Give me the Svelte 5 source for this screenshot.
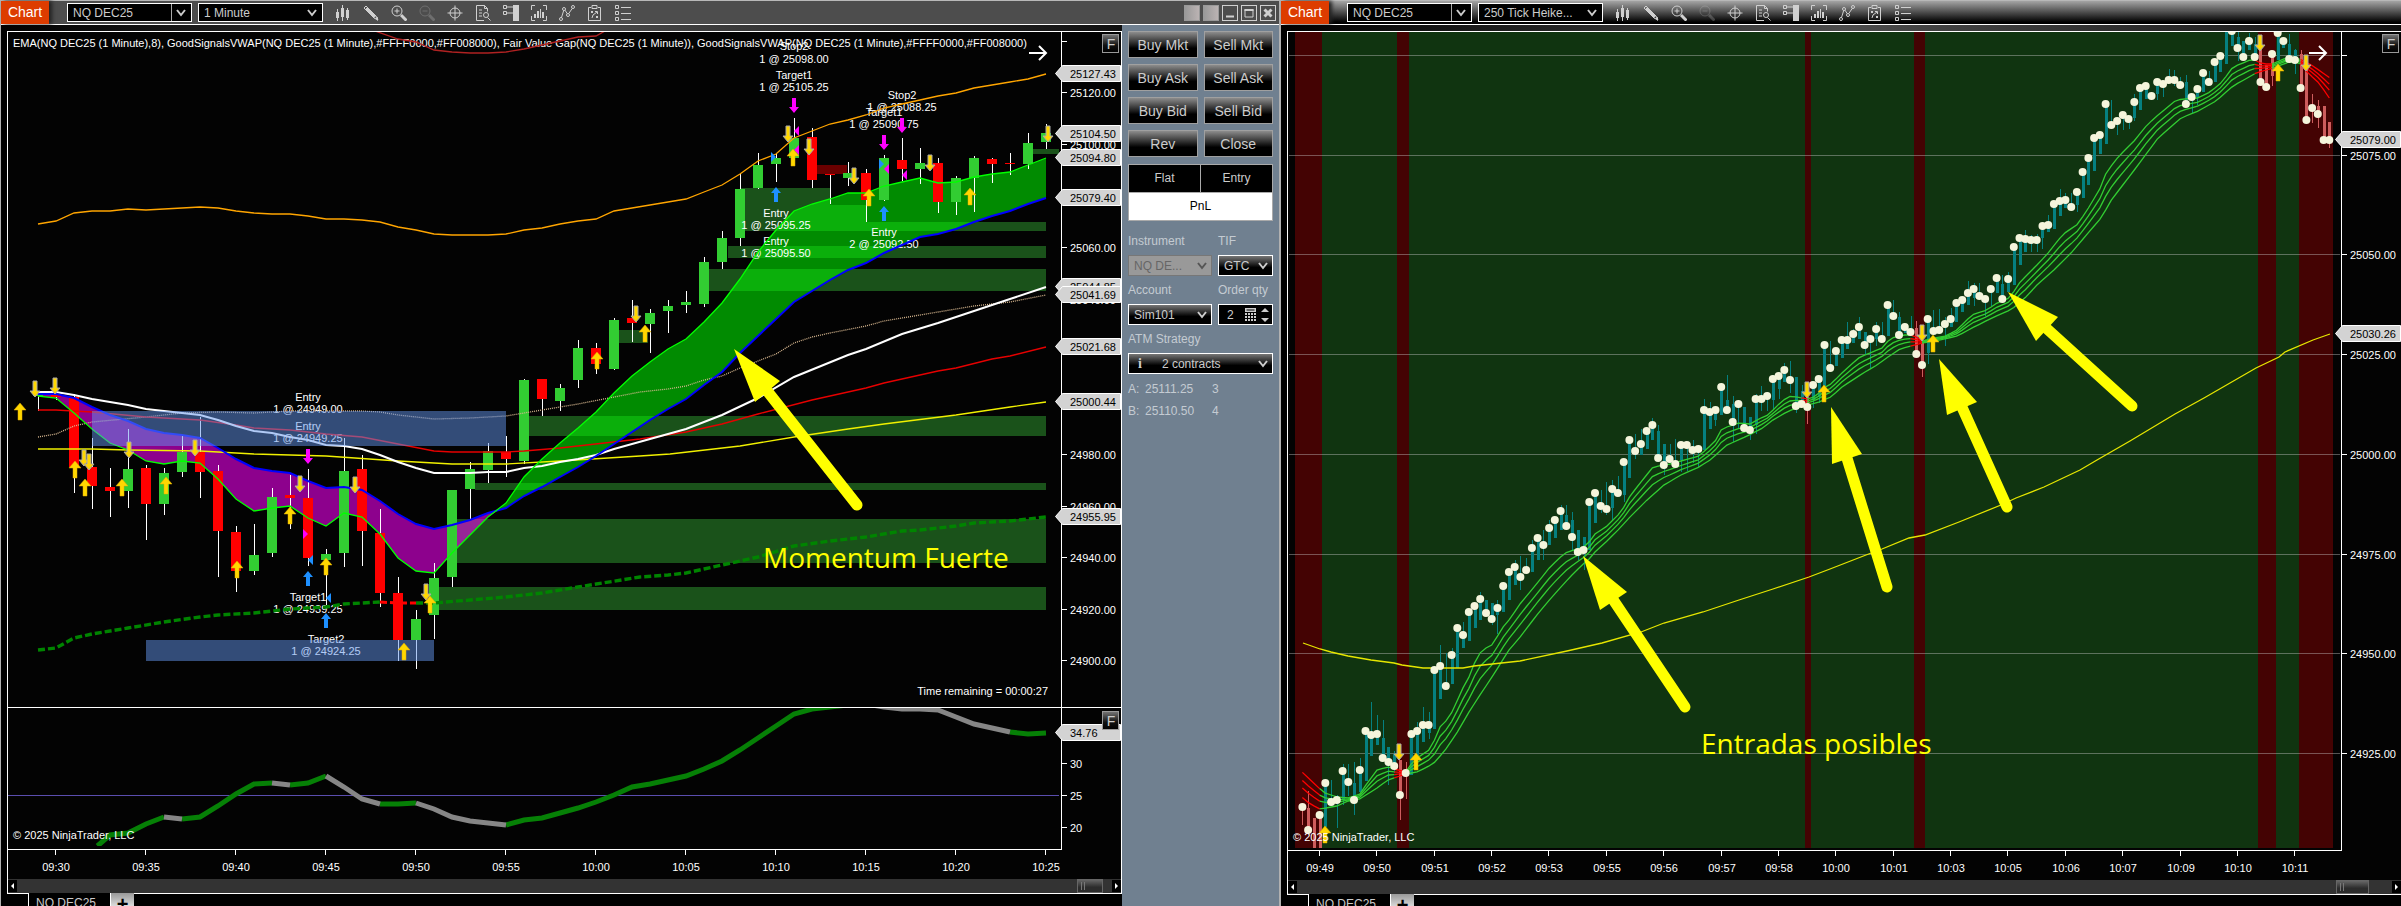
<script>
  const FONT = '"Liberation Sans", Arial, sans-serif';
  const icons = ['bars', 'pencil', 'zoomin', 'zoomout', 'cross', 'find', 'trader', 'region', 'line', 'strategy', 'list'];

  // ---------- 1 minute chart ----------
  const bx = (i) => 38 + 18 * i;
  const line = (ys, start = 0) => ys.map((y, k) => `${bx(k + start)},${y}`).join(' ');
  const join = (p) => p.map((q) => q.join(',')).join(' ');

  // colour, body top, body bottom, high, low
  const candles = [
    ['g', 394, 396, 394, 411], ['r', 394, 397, 393, 400], ['r', 397, 467, 394, 493], ['r', 467, 486, 438, 509],
    ['r', 487, 491, 468, 517], ['g', 469, 491, 429, 508], ['r', 468, 504, 465, 540], ['g', 473, 504, 468, 515],
    ['g', 452, 472, 436, 477], ['r', 452, 472, 417, 498], ['r', 471, 531, 465, 577], ['r', 532, 571, 526, 592],
    ['g', 555, 571, 524, 575], ['g', 497, 553, 488, 557], ['r', 495, 498, 475, 529], ['r', 498, 558, 469, 566],
    ['g', 554, 560, 549, 605], ['g', 471, 553, 438, 567], ['r', 469, 531, 455, 566], ['r', 533, 593, 509, 607],
    ['r', 593, 640, 577, 661], ['g', 619, 640, 610, 669], ['g', 578, 615, 563, 639], ['g', 490, 577, 490, 587],
    ['g', 469, 489, 462, 519], ['g', 451, 470, 443, 483], ['r', 452, 459, 436, 477], ['g', 380, 461, 379, 464],
    ['r', 379, 399, 379, 416], ['g', 388, 401, 384, 411], ['g', 348, 380, 340, 388], ['r', 348, 364, 343, 374],
    ['g', 320, 369, 318, 370], ['r', 318, 323, 300, 342], ['g', 313, 324, 309, 353], ['g', 306, 311, 300, 333],
    ['g', 302, 305, 291, 313], ['g', 262, 304, 257, 307], ['g', 238, 262, 231, 269], ['g', 189, 238, 174, 246],
    ['g', 165, 188, 153, 189], ['g', 158, 164, 153, 182], ['g', 138, 158, 118, 160], ['r', 137, 180, 128, 188],
    ['r', 174, 175, 174, 204], ['g', 173, 178, 162, 186], ['r', 173, 200, 169, 222], ['g', 158, 200, 155, 201],
    ['r', 160, 169, 138, 181], ['g', 163, 169, 148, 184], ['r', 163, 202, 158, 213], ['g', 178, 202, 176, 215],
    ['g', 158, 178, 156, 212], ['r', 159, 164, 158, 183], ['r', 163, 164, 153, 175], ['g', 143, 164, 133, 169],
    ['g', 133, 142, 124, 149]
  ];
  const ema = [396, 398, 413, 429, 443, 450, 461, 464, 461, 463, 479, 499, 511, 508, 506, 518, 526, 513, 517, 534, 558, 571, 573, 553, 535, 517, 503, 477, 459, 443, 428, 412, 393, 376, 362, 349, 339, 322, 303, 279, 252, 230, 211, 204, 199, 193, 193, 186, 182, 178, 183, 182, 177, 174, 172, 165, 158];
  const slow = [394, 394, 398, 407, 415, 421, 429, 433, 435, 438, 448, 459, 468, 471, 473, 481, 488, 487, 490, 501, 514, 524, 529, 525, 520, 513, 508, 496, 487, 477, 467, 456, 444, 432, 420, 409, 399, 385, 372, 353, 336, 319, 302, 291, 280, 270, 263, 253, 245, 237, 234, 229, 222, 216, 211, 204, 198];
  const upper = [224, 221, 213, 211, 211, 209, 210, 209, 208, 207, 208, 211, 213, 214, 214, 216, 219, 219, 220, 222, 227, 230, 234, 235, 235, 235, 234, 230, 228, 224, 221, 219, 211, 208, 205, 202, 199, 192, 185, 174, 161, 154, 138, 131, 124, 120, 115, 108, 104, 100, 96, 93, 88, 85, 82, 79, 74];
  const white = [...[392, 392, 395, 399, 402, 405, 409, 411, 413, 415, 420, 426, 431, 433, 437, 440, 445, 446, 449, 455, 462, 468, 473, 473, 473, 472, 472, 468, 466, 462, 459, 455, 449, 444, 439].map((y, i) => [bx(i), y]), [686, 429], [722, 415], [758, 398], [794, 377], [848, 355], [866, 349], [902, 334], [938, 323], [974, 311], [1010, 299], [1046, 287]];
  const red = [[38, 410], [56, 410], [92, 412], [146, 417], [200, 420], [236, 425], [254, 428], [290, 430], [326, 434], [362, 437], [398, 444], [434, 451], [452, 452], [506, 452], [524, 451], [560, 448], [640, 439], [686, 432], [722, 424], [758, 414], [812, 400], [866, 388], [884, 383], [938, 371], [956, 368], [992, 359], [1010, 356], [1046, 347]];
  const yellow = [[38, 449], [92, 449], [128, 450], [200, 451], [254, 454], [326, 456], [398, 461], [452, 464], [506, 464], [560, 461], [640, 456], [670, 454], [740, 446], [794, 437], [848, 429], [884, 424], [956, 415], [1010, 407], [1046, 402]];
  const tan = [[38, 437], [56, 434], [74, 426], [92, 422], [146, 417], [182, 413], [218, 412], [254, 413], [290, 411], [362, 411], [380, 412], [398, 415], [434, 419], [470, 418], [506, 416], [542, 410], [578, 404], [640, 392], [668, 389], [686, 386], [704, 380], [722, 376], [740, 368], [758, 361], [776, 354], [794, 343], [812, 337], [830, 333], [866, 326], [884, 321], [938, 312], [974, 306], [1010, 302], [1046, 295]];
  const vwapA = [[38, 650], [56, 648], [74, 638], [92, 634], [128, 628], [164, 622], [200, 617], [218, 615], [254, 613], [290, 609], [326, 607], [344, 604], [380, 602]];
  const vwapB = [[416, 603], [434, 603], [470, 600], [506, 597], [542, 593], [578, 587], [640, 577], [668, 575], [686, 573], [704, 569], [722, 565], [758, 557], [794, 546], [830, 541], [866, 537], [902, 531], [920, 530], [956, 526], [974, 523], [1010, 521], [1046, 517]];
  const topBand = [[375, 31], [398, 39], [416, 42], [434, 50], [452, 52], [470, 53], [488, 53], [506, 52], [524, 49], [560, 41], [578, 37], [596, 36], [605, 31]];
  const gaps = [[740, 188, 90, 17], [740, 205, 127, 17], [740, 222, 306, 9], [728, 246, 318, 12], [709, 269, 337, 22], [619, 330, 29, 13], [529, 416, 517, 20], [475, 483, 571, 7], [457, 519, 589, 44], [438, 587, 608, 23], [1032, 149, 27, 5]];
  const cross = 25.6;
  const cloud = (a, b) => {
    const up = [], dn = [];
    for (let i = a; i <= b; i++) { up.push([bx(i), ema[i]]); dn.unshift([bx(i), slow[i]]); }
    return [up, dn];
  };
  const [pu, pd] = cloud(0, 25);
  const purple = join([...pu, [bx(cross), 510], ...pd]);
  const [gu, gd] = cloud(26, 56);
  const green = join([[bx(cross), 510], ...gu, ...gd]);

  const ups = [[20, 403], [75, 461], [85, 479], [122, 479], [166, 477], [290, 507], [237, 561], [326, 558], [430, 596], [404, 643], [597, 352], [645, 325], [793, 149], [869, 189], [970, 188]];
  const downs = [[35, 380], [55, 377], [84, 449], [89, 453], [129, 441], [195, 439], [300, 475], [355, 476], [426, 583], [636, 305], [788, 125], [809, 138], [854, 167], [930, 154], [1048, 125]];
  const magentas = [[794, 98], [884, 135], [902, 118], [308, 449]];
  const blues = [[776, 187], [884, 206], [308, 571], [326, 613]];
  const fills = [['m', 794, 131, -1], ['m', 794, 150, -1], ['m', 884, 169, -1], ['m', 902, 175, -1], ['b', 776, 157, 1], ['b', 884, 164, 1], ['m', 308, 534, 1], ['b', 308, 560, -1], ['b', 326, 598, -1]];
  const notes = [
    [794, 46, 'Stop2'], [794, 59, '1 @ 25098.00'], [794, 75, 'Target1'], [794, 87, '1 @ 25105.25'],
    [902, 95, 'Stop2'], [902, 107, '1 @ 25088.25'], [884, 112, 'Target1'], [884, 124, '1 @ 25090.75'],
    [776, 213, 'Entry'], [776, 225, '1 @ 25095.25'], [776, 241, 'Entry'], [776, 253, '1 @ 25095.50'],
    [884, 232, 'Entry'], [884, 244, '2 @ 25092.50'],
    [308, 397, 'Entry'], [308, 409, '1 @ 24949.00'], [308, 426, 'Entry'], [308, 438, '1 @ 24949.25'],
    [308, 597, 'Target1'], [308, 609, '1 @ 24939.25'], [326, 639, 'Target2'], [326, 651, '1 @ 24924.25']
  ];
  const scaleL = [[41, ''], [92, '25120.00'], [144, '25100.00'], [247, '25060.00'], [299, '25040.00'], [454, '24980.00'], [506, '24960.00'], [557, '24940.00'], [609, '24920.00'], [660, '24900.00'], [763, '30'], [795, '25'], [827, '20']];
  const tagsL = [[73, '25127.43'], [133, '25104.50'], [157, '25094.80'], [197, '25079.40'], [286, '25044.85'], [294, '25041.69'], [346, '25021.68'], [401, '25000.44'], [516, '24955.95'], [732, '34.76']];
  const timesL = ['09:30', '09:35', '09:40', '09:45', '09:50', '09:55', '10:00', '10:05', '10:10', '10:15', '10:20', '10:25'];

  const osc = { 3.3: 846, 4: 835, 5: 833, 6: 824, 7: 817, 8: 819, 9: 817, 10: 806, 11: 794, 12: 784, 13: 783, 14: 785, 15: 783, 16: 776, 17: 787, 18: 799, 19: 804, 20: 804, 21: 803, 22: 809, 23: 817, 24: 821, 25: 823, 26: 825, 27: 820, 28: 818, 29: 813, 30: 808, 31: 802, 32: 795, 33: 787, 34: 784, 35: 780, 36: 776, 37: 769, 38: 761, 39: 750, 40: 738, 41: 726, 42: 714, 43: 709, 44: 707, 45: 705, 46: 704, 47: 707, 48: 709, 49: 709, 50: 710, 51: 717, 52: 724, 53: 728, 54: 732, 55: 734, 56: 733 };
  const oscPart = (a, b) => Object.entries(osc).map(([k, y]) => [+k, y]).filter(([k]) => k >= a && k <= b).sort((p, q) => p[0] - q[0]).map(([k, y]) => `${bx(k)},${y}`).join(' ');
  const oscGreen = [[3, 7], [8, 13], [14, 16], [19, 21], [26, 45], [54, 56]];
  const oscGray = [[7, 8], [13, 14], [16, 19], [21, 26], [45, 54]];

  // ---------- 250 tick chart ----------
  // close, body end, high, low (0 = none)
  const ticks = [
    [807, 807, 0, 825], [830, 808, 791, 0], [860, 818, 0, 0], [815, 848, 0, 0], [783, 827, 0, 0], [802, 802, 780, 0], [800, 800, 795, 828], [771, 800, 764, 805], [782, 782, 764, 796], [800, 783, 762, 815],
    [770, 792, 758, 0], [731, 781, 0, 0], [735, 756, 702, 0], [734, 745, 715, 0], [758, 738, 720, 0], [762, 747, 0, 785], [766, 754, 751, 773], [795, 760, 0, 820], [773, 773, 762, 799], [734, 775, 0, 0],
    [731, 760, 722, 0], [725, 742, 707, 0], [725, 733, 712, 739], [670, 729, 0, 0], [666, 699, 645, 0], [686, 686, 653, 0], [655, 684, 648, 0], [628, 668, 0, 0], [635, 648, 622, 0], [612, 641, 0, 0],
    [606, 628, 0, 0], [599, 620, 592, 0], [613, 600, 0, 0], [619, 603, 0, 625], [608, 615, 600, 634], [586, 612, 0, 0], [572, 600, 0, 0], [567, 585, 560, 0], [577, 577, 556, 590], [570, 570, 558, 0],
    [548, 572, 540, 0], [538, 560, 0, 0], [545, 545, 530, 560], [528, 545, 520, 0], [520, 538, 0, 0], [511, 530, 505, 0], [526, 515, 505, 0], [537, 520, 512, 550], [552, 530, 0, 560], [550, 537, 0, 570],
    [502, 550, 0, 0], [493, 523, 0, 0], [506, 506, 490, 513], [509, 509, 482, 515], [489, 508, 480, 521], [493, 493, 476, 0], [462, 495, 0, 502], [440, 478, 0, 0], [451, 451, 434, 459], [444, 455, 429, 0],
    [431, 449, 0, 0], [425, 440, 418, 0], [458, 431, 425, 0], [465, 444, 0, 475], [459, 459, 444, 463], [464, 464, 439, 0], [445, 460, 0, 472], [445, 445, 0, 471], [450, 450, 440, 463], [449, 449, 0, 467],
    [410, 450, 399, 0], [412, 429, 402, 0], [410, 420, 407, 426], [387, 415, 383, 0], [410, 400, 375, 0], [422, 404, 396, 442], [404, 404, 400, 429], [428, 407, 0, 0], [430, 417, 0, 440], [399, 425, 394, 434],
    [399, 399, 386, 411], [396, 396, 392, 411], [379, 400, 375, 409], [376, 389, 372, 399], [370, 382, 363, 0], [380, 380, 361, 393], [406, 377, 0, 413], [404, 391, 385, 0], [407, 397, 0, 424], [385, 400, 0, 408],
    [379, 397, 0, 403], [345, 386, 0, 0], [368, 368, 341, 0], [351, 366, 0, 0], [340, 358, 336, 0], [340, 349, 322, 0], [334, 343, 329, 0], [327, 339, 317, 0], [345, 332, 0, 355], [339, 339, 335, 368],
    [329, 339, 322, 346], [339, 339, 322, 0], [305, 336, 0, 0], [316, 316, 300, 0], [335, 317, 312, 0], [327, 333, 0, 0], [332, 332, 316, 0], [354, 328, 321, 0], [365, 342, 0, 377], [319, 353, 0, 364],
    [331, 331, 310, 0], [330, 330, 309, 0], [324, 324, 317, 346], [319, 327, 308, 0], [303, 322, 0, 0], [300, 312, 0, 0], [293, 305, 281, 0], [289, 298, 283, 306], [296, 296, 283, 0], [299, 299, 0, 316],
    [289, 289, 0, 306], [278, 293, 0, 0], [299, 284, 275, 0], [279, 292, 272, 0], [247, 285, 0, 0], [238, 265, 0, 0], [239, 252, 230, 0], [240, 240, 235, 252], [240, 240, 234, 252], [226, 238, 0, 249],
    [225, 232, 215, 0], [204, 229, 0, 0], [201, 216, 189, 0], [200, 208, 193, 0], [207, 207, 193, 0], [192, 205, 0, 212], [172, 198, 0, 0], [158, 185, 0, 0], [138, 171, 0, 0], [135, 154, 0, 0],
    [104, 144, 0, 0], [125, 125, 100, 0], [121, 121, 0, 135], [115, 115, 0, 130], [119, 119, 0, 129], [102, 118, 94, 121], [88, 110, 0, 0], [86, 99, 0, 0], [96, 96, 0, 0], [82, 94, 0, 100],
    [84, 84, 0, 97], [80, 80, 69, 0], [80, 80, 70, 86], [85, 85, 77, 0], [104, 82, 75, 0], [97, 97, 0, 113], [89, 97, 0, 105], [73, 92, 0, 0], [82, 82, 71, 0], [62, 82, 0, 0],
    [56, 72, 0, 0], [20, 64, 0, 0], [31, 46, 0, 0], [48, 37, 32, 61], [57, 41, 0, 0], [41, 50, 33, 0], [57, 44, 37, 0], [82, 47, 0, 0], [87, 65, 0, 0], [54, 76, 0, 86],
    [33, 60, 0, 0], [41, 48, 0, 0], [59, 44, 34, 0], [60, 50, 49, 74], [88, 54, 50, 0], [120, 60, 0, 0], [108, 108, 94, 123], [114, 106, 100, 128], [140, 106, 0, 0], [140, 122, 0, 148]
  ];
  const tx = (n) => 1302.4 + 5.737 * n;
  const redTicks = new Set([0, 1, 2, 3, 17, 18, 88, 107, 108, 167, 168, 169, 174, 175, 176, 177, 178, 179]);
  const fastMa = [[1302, 772], [1320, 789], [1325, 793], [1337, 797], [1348, 798], [1360, 794], [1366, 785], [1377, 770], [1388, 767], [1394, 769], [1406, 772], [1412, 763], [1417, 758], [1429, 750], [1435, 739], [1440, 727], [1446, 721], [1452, 712], [1458, 699], [1463, 688], [1469, 677], [1474, 664], [1480, 653], [1486, 648], [1492, 645], [1497, 637], [1503, 627], [1509, 620], [1520, 604], [1535, 586], [1550, 567], [1565, 553], [1577, 549], [1584, 547], [1590, 541], [1595, 534], [1607, 526], [1618, 515], [1624, 507], [1630, 496], [1641, 482], [1653, 467], [1670, 464], [1681, 461], [1699, 456], [1710, 446], [1716, 440], [1721, 430], [1727, 427], [1739, 423], [1750, 424], [1761, 418], [1768, 415], [1779, 404], [1785, 399], [1791, 396], [1808, 399], [1814, 397], [1819, 393], [1825, 387], [1831, 384], [1842, 373], [1854, 362], [1860, 357], [1865, 355], [1877, 350], [1882, 348], [1888, 341], [1894, 337], [1905, 335], [1911, 335], [1916, 337], [1922, 341], [1934, 338], [1946, 336], [1957, 330], [1969, 318], [1974, 314], [1987, 310], [1997, 303], [2009, 298], [2015, 290], [2020, 282], [2037, 265], [2049, 252], [2060, 238], [2066, 232], [2078, 224], [2089, 207], [2101, 187], [2106, 173], [2118, 157], [2135, 140], [2147, 125], [2158, 115], [2175, 101], [2182, 99], [2198, 98], [2210, 92], [2221, 83], [2233, 67], [2250, 60], [2256, 60], [2262, 64], [2273, 64], [2279, 61], [2289, 57], [2296, 58], [2302, 60], [2313, 66], [2330, 78]];
  const slowMa = [[1302, 797], [1310, 804], [1320, 809], [1337, 806], [1348, 801], [1360, 799], [1366, 795], [1377, 788], [1388, 780], [1394, 778], [1406, 774], [1417, 772], [1429, 766], [1435, 762], [1446, 749], [1458, 731], [1469, 712], [1480, 695], [1492, 677], [1497, 669], [1509, 650], [1521, 636], [1533, 620], [1545, 605], [1560, 588], [1570, 577], [1580, 567], [1590, 558], [1595, 552], [1607, 541], [1618, 530], [1630, 517], [1647, 500], [1664, 485], [1681, 475], [1699, 467], [1710, 460], [1727, 445], [1745, 437], [1761, 429], [1773, 420], [1785, 413], [1796, 408], [1808, 405], [1819, 402], [1831, 397], [1842, 387], [1854, 379], [1865, 372], [1877, 365], [1888, 357], [1900, 349], [1911, 346], [1922, 343], [1940, 340], [1957, 336], [1974, 327], [1992, 318], [2012, 309], [2026, 297], [2037, 285], [2055, 269], [2072, 252], [2089, 232], [2101, 218], [2112, 199], [2129, 177], [2141, 161], [2158, 138], [2181, 118], [2198, 111], [2216, 101], [2233, 86], [2256, 73], [2273, 68], [2289, 62], [2299, 62], [2307, 72], [2319, 83], [2330, 99]];
  const at = (p, x) => {
    let k = 1;
    while (k < p.length - 1 && p[k][0] < x) k++;
    const [x0, y0] = p[k - 1], [x1, y1] = p[k];
    return y0 + ((y1 - y0) * (x - x0)) / (x1 - x0);
  };
  const runs = [[0, 3, 'r'], [3, 16, 'g'], [16, 18, 'r'], [18, 87, 'g'], [87, 88, 'r'], [88, 106, 'g'], [106, 108, 'r'], [108, 166, 'g'], [166, 169, 'r'], [169, 174, 'g'], [174, 179, 'r']];
  const ribbon = [];
  for (const f of [0, 0.32, 0.62, 1])
    for (const [a, b, c] of runs) {
      const p = [];
      for (let n = a; n <= b; n++) {
        const x = tx(n), u = at(fastMa, x), v = at(slowMa, x);
        p.push(`${x.toFixed(1)},${(u + (v - u) * f).toFixed(1)}`);
      }
      ribbon.push([c, p.join(' ')]);
    }
  const longMa = [[1303, 643], [1320, 649], [1331, 652], [1348, 656], [1371, 660], [1394, 663], [1402, 665], [1423, 668], [1463, 668], [1474, 666], [1520, 661], [1567, 651], [1602, 643], [1641, 632], [1664, 623], [1703, 612], [1739, 600], [1773, 589], [1809, 577], [1830, 569], [1866, 555], [1882, 549], [1909, 538], [1925, 535], [1959, 522], [2001, 505], [2016, 498], [2044, 487], [2080, 470], [2097, 460], [2130, 441], [2175, 414], [2204, 398], [2256, 368], [2279, 357], [2285, 352], [2313, 340], [2330, 334]];
  const zones = [[1295, 27], [1397, 12], [1805, 6], [1914, 11], [2258, 18], [2299, 34]];
  const scaleR = [[55, ''], [155, '25075.00'], [254, '25050.00'], [354, '25025.00'], [454, '25000.00'], [554, '24975.00'], [653, '24950.00'], [753, '24925.00']];
  const tagsR = [[139, '25079.00'], [333, '25030.26']];
  const timesR = ['09:49', '09:50', '09:51', '09:52', '09:53', '09:55', '09:56', '09:57', '09:58', '10:00', '10:01', '10:03', '10:05', '10:06', '10:07', '10:09', '10:10', '10:11'];
  const upsR = [[1416, 753], [1325, 826], [1824, 385], [1933, 335], [2278, 64]];
  const downsR = [[1399, 744], [1807, 382], [1922, 325], [2260, 35], [2306, 55]];
  const pointersR = [
    ['1583,556 1627,592 1600,610', 1612, 598, 1685, 707],
    ['1831,407 1862,454 1832,464', 1846, 455, 1887, 587],
    ['1939,359 1977,402 1947,415', 1961, 405, 2007, 507],
    ['2008,292 2058,317 2036,341', 2045, 327, 2132, 406]
  ];
  const orders = [['Buy Mkt', 'Sell Mkt'], ['Buy Ask', 'Sell Ask'], ['Buy Bid', 'Sell Bid'], ['Rev', 'Close']];
</script>

{#snippet icon(name)}
  <svg class="ico" class:dim={name === 'zoomout'} viewBox="0 0 16 16" width="16" height="16" aria-hidden="true">
    {#if name === 'bars'}
      <path d="M2.5 4v12M7.5 0v16M12.5 3v12" />
      <path class="solid" d="M1 7h3v6H1zM6 3h3v9H6zM11 5h3v8h-3z" />
    {:else if name === 'pencil'}
      <path d="M1 3l2-2 10 10 2 4-4-2L1 3zM3 5l2-2M3 3l9 9" />
      <path class="solid" d="M3 5l2-2 8 8-2 2zM12 13l3 3v-4z" />
    {:else if name === 'zoomin'}
      <circle cx="6" cy="6" r="5" /><path d="M6 3.500v5M3.500 6h5" /><path d="M10 10l5.500 5.500" stroke-width="3" />
    {:else if name === 'zoomout'}
      <circle cx="6" cy="6" r="5" /><path d="M3.500 6h5" /><path d="M10 10l5.500 5.500" stroke-width="3" />
    {:else if name === 'cross'}
      <circle cx="8" cy="8" r="5" /><path d="M8 .5v15M.5 8h15" />
    {:else if name === 'find'}
      <path d="M9 15.500H1.500V.5h8l3 3v3M9.500.5v3h3M4 5h3M4 8h3M4 11h3M12.500 12.500l3 3" /><circle cx="11" cy="10" r="2.500" />
    {:else if name === 'trader'}
      <path d="M.5.500h3v3h-3zM.5 6.500h3v3h-3zM4 2h7M4 8h7" /><path class="solid" d="M10 0h6v16h-6z" />
    {:else if name === 'region'}
      <path d="M4 .5H.5V5M12 .5h3.500V5M.5 11v4.500H4M15.500 11v4.500H12" /><path class="solid" d="M3 9h2v4H3zM6 6h2v7H6zM9 4h1v9H9zM11 7h2v6h-2z" />
    {:else if name === 'line'}
      <circle cx="2" cy="14" r="1.500" /><circle cx="5" cy="4" r="1.500" /><circle cx="9" cy="10" r="1.500" /><circle cx="14" cy="2" r="1.500" />
      <path d="M2.500 12.500L4.700 5.500M6 5.200l2.300 3.500M9.700 8.600l3.600-5.200" />
    {:else if name === 'strategy'}
      <path d="M4 2.500H1.500v13h12v-13H11M5 .5h5v3H5zM4 6l2 2M6 6L4 8M9 11l2 2M11 11l-2 2M5 13l1-3 4-3M8 6.500h2.500V9" />
    {:else if name === 'list'}
      <path d="M.5.500h3v3h-3zM.5 6.500h3v3h-3zM.5 12.500h3v3h-3zM6 2.500h10M6 8.500h10M6 14.500h10" />
    {/if}
  </svg>
{/snippet}

{#snippet chev()}
  <svg class="chev" viewBox="0 0 10 8" width="10" height="8" aria-hidden="true"><path d="M1 1l4 5 4-5" /></svg>
{/snippet}

{#snippet toolbar(id, period)}
  <header class="toolbar {id}">
    <span class="title">Chart</span>
    <span class="combo split"><select aria-label="Instrument"><option>NQ DEC25</option></select>{@render chev()}</span>
    <span class="combo"><select aria-label="Period"><option>{period}</option></select>{@render chev()}</span>
    <div class="tools">
      {#each icons as name}<button type="button" aria-label={name}>{@render icon(name)}</button>{/each}
    </div>
    {#if id === 'left'}
      <div class="winbtns">
        <button type="button" class="link" aria-label="Link instrument"></button>
        <button type="button" class="link" aria-label="Link interval"></button>
        <button type="button" aria-label="Minimize"><svg viewBox="0 0 14 14" width="14" height="14"><path d="M3 10.500h8" stroke-width="2" /></svg></button>
        <button type="button" aria-label="Maximize"><svg viewBox="0 0 14 14" width="14" height="14"><path d="M3 3.500h8v7.500H3z" /><path d="M2.500 4h9" stroke-width="2" /></svg></button>
        <button type="button" aria-label="Close"><svg viewBox="0 0 14 14" width="14" height="14"><path d="M3.500 3.500l7 7M10.500 3.500l-7 7" stroke-width="3" /></svg></button>
      </div>
    {/if}
  </header>
{/snippet}

{#snippet footer(wide)}
  <div class="scroll">
    <button type="button" aria-label="Scroll left"><svg viewBox="0 0 9 12" width="9" height="12"><path d="M6 3v6L3 6z" /></svg></button>
    <span class="track"></span>
    <span class="thumb" class:wide></span>
    <button type="button" aria-label="Scroll right"><svg viewBox="0 0 9 12" width="9" height="12"><path d="M3 3v6l3-3z" /></svg></button>
  </div>
{/snippet}

{#snippet tabs()}
  <nav class="tabs"><span class="lead"></span><a href="#tab">NQ DEC25</a><button type="button" aria-label="Add tab">+</button><span class="rest"></span></nav>
{/snippet}

{#snippet up(x, y)}
  <path class="gold" d="M{x} {y}l6 7h-4v10h-4v-10h-4z" />
{/snippet}
{#snippet down(x, y)}
  <path class="gold edged" d="M{x} {y + 17}l5-6h-3v-10h-4v10h-3z" />
{/snippet}
{#snippet tag(x, y, text, w)}
  <path class="tag" d="M{x + 0.5} {y + 0.5}l7-8h{w}v16h-{w}z" />
  <text class="dark" x={x + 15} y={y + 5}>{text}</text>
{/snippet}
{#snippet fbox(x, y)}
  <rect x={x + 0.5} y={y + 0.5} width="16" height="18" fill="url(#fgrad)" stroke="#999" />
  <text class="f" x={x + 9} y={y + 15}>F</text>
{/snippet}
{#snippet nextArrow(x)}
  <path class="next" d="M{x} 53h17M{x + 10} 46l7 7-7 7" />
{/snippet}

<main style:font-family={FONT}>
  <section class="window first">
    {@render toolbar('left', '1 Minute')}
    <div class="body">
      <div class="chart">
        <div class="strip"></div>
        <div class="frame">
          <svg class="plot" viewBox="8 32 1113 847" preserveAspectRatio="xMinYMin meet" role="img" aria-label="NQ DEC25 1 minute chart">
            <defs>
              <linearGradient id="fgrad" x1="0" y1="0" x2="0" y2="1"><stop offset="0" stop-color="#777" /><stop offset="0.6" stop-color="#111" /><stop offset="1" stop-color="#000" /></linearGradient>
              <clipPath id="sub"><rect x="8" y="708" width="1052" height="138" /></clipPath>
            </defs>
            {#each gaps as [x, y, w, h]}<rect class="gap" {x} {y} width={w} height={h} />{/each}
            <rect x="817" y="165" width="30" height="9" fill="#6a0000" />
            <polygon points={purple} fill="rgba(255,0,255,.55)" />
            <polygon points={green} fill="rgba(0,255,0,.54)" />
            <g shape-rendering="crispEdges">
              {#each candles as [c, t, b, h, l], i}
                <rect x={bx(i)} y={h} width="1" height={l - h} fill="#fff" />
                <rect x={bx(i) - 5} y={t} width="10" height={b - t} fill={c === 'g' ? '#32cd32' : '#f00'} />
              {/each}
            </g>
            <text x="13" y="47">EMA(NQ DEC25 (1 Minute),8), GoodSignalsVWAP(NQ DEC25 (1 Minute),#FFFF0000,#FF008000), Fair Value Gap(NQ DEC25 (1 Minute)), GoodSignalsVWAP(NQ DEC25 (1 Minute),#FFFF0000,#FF008000)</text>
            {#each notes as [x, y, s]}<text class="mid" {x} y={y + 4}>{s}</text>{/each}
            <g class="lines">
              <polyline points={join(topBand)} stroke="#b02222" />
              <polyline points={line(upper)} stroke="#ffa500" />
              <polyline points={join(tan)} stroke="#d8b890" stroke-dasharray="1 1" />
              <polyline points={join(yellow)} stroke="#f0f000" />
              <polyline points={join(red)} stroke="#e60000" />
              <polyline points={join(white)} stroke="#fff" stroke-width="2" />
              <polyline points={line(slow)} stroke="#00f" stroke-width="2" />
              <polyline points={line(ema)} stroke="#0f0" />
              <polyline points={join(vwapA)} stroke="#008400" stroke-width="3.4" stroke-dasharray="7 3" />
              <polyline points="380,602 398,603 416,603" stroke="#f00" stroke-width="3" stroke-dasharray="7 3" />
              <polyline points={join(vwapB)} stroke="#008400" stroke-width="3.4" stroke-dasharray="7 3" />
            </g>
            <rect class="supply" x="92" y="411" width="414" height="35" />
            <rect class="supply" x="146" y="640" width="288" height="21" />
            {#each fills as [c, x, y, d]}<path d={d < 0 ? `M${x + 5} ${y - 5}v10l-5-5z` : `M${x - 5} ${y - 5}v10l5-5z`} fill={c === 'm' ? '#f0f' : '#1e90ff'} />{/each}
            {#each downs as [x, y]}{@render down(x, y)}{/each}
            {#each ups as [x, y]}{@render up(x, y)}{/each}
            {#each magentas as [x, y]}<path fill="#f0f" d="M{x} {y + 15}l5-6h-3v-9h-4v9h-3z" />{/each}
            {#each blues as [x, y]}<path fill="#1e90ff" d="M{x} {y}l5 6h-3v9h-4v-9h-3z" />{/each}
            {@render nextArrow(1029)}
            <text class="end" x="1048" y="695">Time remaining = 00:00:27</text>
            <g clip-path="url(#sub)">
              <rect x="8" y="795" width="1051" height="1" fill="#6a5acd" opacity="0.85" />
              <g class="lines osc">
                {#each oscGreen as [a, b]}<polyline points={oscPart(a, b)} stroke="#068006" />{/each}
                {#each oscGray as [a, b]}<polyline points={oscPart(a, b)} stroke="#868686" />{/each}
              </g>
            </g>
            <text x="13" y="839">© 2025 NinjaTrader, LLC</text>
            <g fill="#fff" shape-rendering="crispEdges">
              <rect x="8" y="707" width="1113" height="1" />
              <rect x="8" y="849" width="1054" height="1" />
              <rect x="1061" y="32" width="1" height="818" />
              {#each scaleL as [y]}<rect x="1062" {y} width="5" height="1" />{/each}
              {#each timesL as t, i}<rect x={55 + 90 * i} y="850" width="1" height="5" />{/each}
            </g>
            {#each scaleL as [y, s]}<text x="1070" y={y + 5}>{s}</text>{/each}
            {#each timesL as t, i}<text class="mid" x={56 + 90 * i} y="871">{t}</text>{/each}
            {#each tagsL as [y, s]}{@render tag(1055, y, s, 58)}{/each}
            {@render fbox(1102, 34)}
            {@render fbox(1102, 711)}
            <polygon points="734,349 780,381 755,402" fill="#ff0" />
            <path class="pointer" d="M768 392L857 505" />
            <text class="note" x="763" y="568">Momentum Fuerte</text>
          </svg>
          {@render footer(false)}
        </div>
        {@render tabs()}
      </div>
      <aside class="trader">
        <div class="orders">
          {#each orders as row}{#each row as label}<button type="button">{label}</button>{/each}{/each}
        </div>
        <div class="position"><span>Flat</span><span>Entry</span><strong>PnL</strong></div>
        <div class="fields">
          <label for="ins">Instrument</label><label for="tif">TIF</label>
          <span class="combo off"><select id="ins" disabled><option>NQ DE...</option></select>{@render chev()}</span>
          <span class="combo shade"><select id="tif"><option>GTC</option></select>{@render chev()}</span>
          <label for="acc">Account</label><label for="qty">Order qty</label>
          <span class="combo shade"><select id="acc"><option>Sim101</option></select>{@render chev()}</span>
          <span class="combo qty">
            <input id="qty" value="2" />
            <svg viewBox="0 0 24 14" width="24" height="14" aria-hidden="true">
              <path class="solid" d="M0 0h11v4H0zM0 5h2v2H0zM3 5h2v2H3zM6 5h2v2H6zM9 5h2v2H9zM0 8h2v2H0zM3 8h2v2H3zM6 8h2v2H6zM9 8h2v2H9zM0 11h2v2H0zM3 11h2v2H3zM6 11h2v2H6zM9 11h2v2H9zM16 4l4-4 4 4zM16 10l4 4 4-4z" />
              <path d="M1.500 2h8" stroke="#000" />
            </svg>
          </span>
          <label class="full" for="atm">ATM Strategy</label>
          <span class="combo shade full atm"><b>i</b><select id="atm"><option>2 contracts</option></select>{@render chev()}</span>
        </div>
        <dl class="quotes"><dt>A:</dt><dd>25111.25</dd><dd>3</dd><dt>B:</dt><dd>25110.50</dd><dd>4</dd></dl>
      </aside>
    </div>
  </section>

  <section class="window second">
    {@render toolbar('right', '250 Tick Heike...')}
    <div class="body">
      <div class="chart">
        <div class="strip"></div>
        <div class="frame">
          <svg class="plot" viewBox="1288 32 1113 848" preserveAspectRatio="xMinYMin meet" role="img" aria-label="NQ DEC25 250 tick chart">
            <defs><clipPath id="main"><rect x="1288" y="32" width="1052" height="816" /></clipPath></defs>
            <rect x="1295" y="32" width="1038" height="816" fill="#103410" />
            {#each zones as [x, w]}<rect {x} y="32" width={w} height="816" fill="#440303" />{/each}
            {#each scaleR as [y]}<rect x="1289" {y} width="1051" height="1" fill="rgba(200,200,200,.42)" />{/each}
            <g clip-path="url(#main)">
              {#each ticks as [c, o, h, l], n}
                {@const lo = Math.max(c, o)}
                {@const hi = Math.min(c, o)}
                {@const x = Math.round(tx(n))}
                {@const col = redTicks.has(n) ? '#cd5c5c' : '#058080'}
                <rect x={x - 1} y={hi} width="3" height={lo - hi} fill={col} />
                <rect {x} y={h || hi} width="1" height={(l || lo) - (h || hi)} fill={col} />
              {/each}
              <g class="lines">
                {#each ribbon as [c, p]}<polyline points={p} stroke={c === 'r' ? '#f00' : '#32cd32'} />{/each}
                <polyline points={join(longMa)} stroke="#e6e600" />
              </g>
              {#each ticks as [c], n}<circle cx={tx(n).toFixed(1)} cy={c} r="4" fill="#f5f5dc" />{/each}
              {#each downsR as [x, y]}{@render down(x, y - 1)}{/each}
              {#each upsR as [x, y]}{@render up(x, y)}{/each}
            </g>
            <text x="1293" y="841">© 2025 NinjaTrader, LLC</text>
            {@render nextArrow(2309)}
            <g fill="#fff" shape-rendering="crispEdges">
              <rect x="1288" y="850" width="1054" height="1" />
              <rect x="2341" y="32" width="1" height="819" />
              {#each scaleR as [y]}<rect x="2342" {y} width="5" height="1" />{/each}
              {#each timesR as t, i}<rect x={Math.floor(1319.5 + 57.37 * i)} y="851" width="1" height="5" />{/each}
            </g>
            {#each scaleR as [y, s]}<text x="2350" y={y + 5}>{s}</text>{/each}
            {#each timesR as t, i}<text class="mid" x={Math.round(1320 + 57.37 * i)} y="872">{t}</text>{/each}
            {#each tagsR as [y, s]}{@render tag(2335, y, s, 58)}{/each}
            {@render fbox(2382, 34)}
            {#each pointersR as [p, x1, y1, x2, y2]}
              <polygon points={p} fill="#ff0" />
              <path class="pointer" d="M{x1} {y1}L{x2} {y2}" />
            {/each}
            <text class="note" x="1701" y="754">Entradas posibles</text>
          </svg>
          {@render footer(true)}
        </div>
        {@render tabs()}
      </div>
    </div>
  </section>
</main>

<style>
  :global(body) { background: #000; }
  main { display: grid; grid-template-columns: 1281fr 1120fr; height: 100vh; overflow: hidden; background: #000; color: #ccc; font-size: 12px; }
  button, select, input { font: inherit; color: inherit; margin: 0; padding: 0; border: 0; background: none; }
  .window { display: flex; flex-direction: column; min-width: 0; min-height: 0; border-top: 1px solid #b8b8b8; box-sizing: border-box; }
  .first { border-left: 1px solid #b0b0b0; border-right: 2px solid #b0b0b0; }
  .toolbar { display: flex; align-items: center; height: 23px; flex: none; border-bottom: 1px solid #fff; background: #4d4d4d; }
  .toolbar.right { background: linear-gradient(#a4a4a4, #000 92%); }
  .title { width: 48px; height: 23px; margin-right: 18px; flex: none; background: #dd3c00; color: #fff; font-size: 14px; line-height: 22px; text-align: center; box-shadow: 3px 0 4px #222; }
  .combo { display: flex; align-items: center; position: relative; box-sizing: border-box; border: 1px solid #fff; background: #000; }
  .combo select { appearance: none; flex: 1; min-width: 0; width: 100%; height: 100%; padding-left: 5px; outline: 0; cursor: pointer; }
  .chev { position: absolute; right: 5px; pointer-events: none; fill: none; stroke: #ccc; stroke-width: 2; }
  .toolbar .combo { width: 125px; height: 19px; margin-right: 6px; flex: none; }
  .split::after { content: ""; position: absolute; right: 19px; top: 0; bottom: 0; border-left: 1px solid #aaa; }
  .tools { display: flex; gap: 12px; margin-left: 6px; }
  .tools button { display: flex; width: 16px; }
  .ico { fill: none; stroke: #d0d0d0; stroke-width: 1; }
  .ico .solid { fill: #d0d0d0; stroke: none; }
  .dim { opacity: 0.25; }
  .winbtns { display: flex; gap: 3px; margin-left: auto; padding-right: 3px; }
  .winbtns button { display: flex; width: 16px; height: 16px; box-sizing: border-box; border: 1px solid #d0d0d0; }
  .winbtns svg { fill: none; stroke: #d0d0d0; }
  .winbtns .link { border-color: #999; background: linear-gradient(90deg, #999, #bbb3b3); }
  .body { flex: 1; display: flex; min-height: 0; }
  .chart { flex: 1; display: flex; flex-direction: column; min-width: 0; min-height: 0; background: #000; }
  .strip { height: 6px; flex: none; background: linear-gradient(90deg, #000, #4c4c4c 50%, #101010); }
  .frame { flex: 1; min-height: 0; display: flex; flex-direction: column; margin-left: 6px; border: solid #fff; border-width: 1px 1px 0 1px; background: #030303; }
  .second .frame { border-right: 0; }
  .plot { flex: 1; display: block; width: 100%; min-height: 0; }
  .scroll { display: flex; align-items: center; height: 14px; flex: none; background: #333; }
  .scroll button { display: flex; align-items: center; justify-content: center; width: 9px; height: 12px; background: #000; }
  .scroll svg { fill: #fff; }
  .track { flex: 1; }
  .thumb { width: 24px; height: 12px; margin-right: 9px; border: 1px solid #666; background: linear-gradient(#666, #2c2c2c 60%); }
  .thumb::before { content: ""; display: block; width: 2px; height: 8px; margin: 2px 0 0 3px; border: solid #777; border-width: 0 1px; }
  .thumb.wide { width: 31px; margin-right: 23px; }
  .tabs { display: flex; flex: none; height: 13px; margin-left: 6px; }
  .second .tabs { height: 12px; }
  .lead { width: 21px; border-top: 1px solid #fff; }
  .rest { flex: 1; border-top: 1px solid #fff; }
  .tabs a { width: 74px; height: 22px; padding-left: 7px; flex: none; border: solid #fff; border-width: 0 1px; color: #ccc; text-decoration: none; line-height: 20px; }
  .tabs button { width: 23px; height: 22px; flex: none; background: linear-gradient(#999, #ddd 60%); color: #000; font-size: 20px; font-weight: bold; line-height: 20px; }

  .trader { width: 157px; flex: none; box-sizing: border-box; padding: 6px 6px 0; background: #708090; }
  .orders { display: grid; grid-template-columns: 1fr 1fr; gap: 6px; }
  .orders button { height: 27px; box-sizing: border-box; border: 1px solid #a0a0a0; background: linear-gradient(#8c8c8c, #000 65%); color: #ccc; font-size: 14px; }
  .position { display: grid; grid-template-columns: 1fr 1fr; gap: 1px; margin-top: 7px; border: 1px solid #aaa; background: #aaa; text-align: center; }
  .position span { background: #000; line-height: 27px; }
  .position strong { grid-column: span 2; background: #fff; color: #000; font-weight: normal; line-height: 27px; }
  .fields { display: grid; grid-template-columns: 84px 1fr; column-gap: 6px; margin-top: 6px; }
  .fields label { height: 28px; line-height: 28px; align-self: end; color: #c4cbd2; white-space: nowrap; }
  .fields .combo { height: 21px; }
  .fields .full { grid-column: span 2; }
  .fields .chev { right: 4px; }
  .shade { background: linear-gradient(#777, #000 60%); }
  .off { background: #999; border-color: #777; color: #666; }
  .off select { opacity: 1; }
  .off .chev { stroke: #555; }
  .qty input { width: 26px; padding-left: 8px; box-sizing: border-box; outline: 0; }
  .qty svg { fill: none; }
  .qty .solid { fill: #ccc; }
  .atm b { padding: 0 15px 0 9px; font: bold 14px "Liberation Serif", serif; }
  .quotes { display: grid; grid-template-columns: 17px 67px 1fr; margin: 4px 0 0; line-height: 22px; color: #c4cbd2; }
  .quotes dt, .quotes dd { margin: 0; }

  .plot text { fill: #fff; font-size: 11px; }
  .plot .mid { text-anchor: middle; }
  .plot .end { text-anchor: end; }
  .plot .dark { fill: #000; }
  .plot .f { fill: #ccc; font-size: 14px; text-anchor: middle; }
  .plot .note { fill: #ff0; font-family: "Open Sans", sans-serif; font-size: 28px; }
  .lines { fill: none; stroke-width: 1.3; }
  .osc { stroke-width: 5; }
  .gap { fill: #1a521a; }
  .supply { fill: rgba(100, 149, 237, 0.5); }
  .gold { fill: #ffd700; stroke: #e0a800; stroke-width: 0.5; }
  .edged { stroke: #a9a9a9; stroke-width: 1; }
  .tag { fill: #d3d3d3; stroke: #fff; }
  .next { fill: none; stroke: #fff; stroke-width: 2; }
  .pointer { fill: none; stroke: #ff0; stroke-width: 11; stroke-linecap: round; }
</style>
